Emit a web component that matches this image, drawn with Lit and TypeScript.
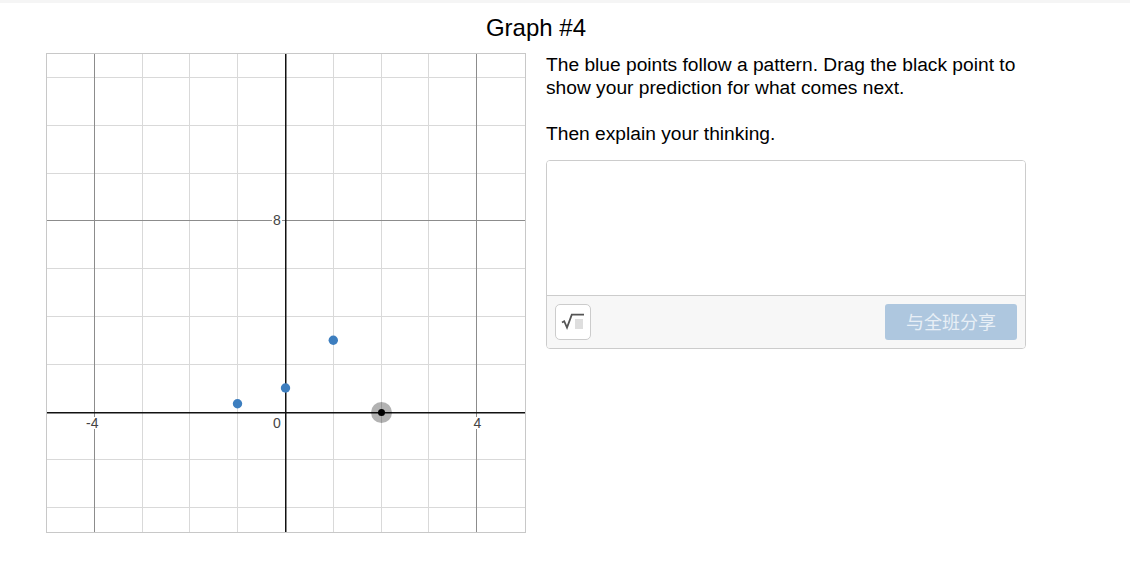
import { LitElement, html, css, svg } from "lit";
import { customElement } from "lit/decorators.js";

@customElement("app-root")
export class AppRoot extends LitElement {
  static styles = css`
    :host { display: block; font-family: "Liberation Sans", Arial, sans-serif; color: #000; background: #fff; min-height: 586px; }
    .topbar { height: 3px; background: #f5f5f5; }
    .wrap { width: 980px; margin-left: 46px; }
    h1 { margin: 0; font-size: 24px; font-weight: 400; line-height: 26px; text-align: center; padding-top: 12px; height: 38px; box-sizing: border-box; }
    .cols { display: grid; grid-template-columns: 480px 480px; column-gap: 20px; margin-top: 12px; }
    .graph { display: block; width: 480px; height: 480px; }
    .prompt { font-size: 19.2px; line-height: 23px; margin: 0; padding-top: 0; }
    .editor { margin-top: 15px; height: 189px; box-sizing: border-box; border: 1px solid #ccc; border-radius: 4px; display: flex; flex-direction: column; overflow: hidden; }
    .input { height: 134px; border-bottom: 1px solid #ccc; flex: none; background: #fff; }
    .bar { flex: 1; background: #f7f7f7; display: flex; align-items: center; justify-content: space-between; padding: 0 8px; }
    .math { width: 36px; height: 36px; box-sizing: border-box; background: #fff; border: 1px solid #ccc; border-radius: 5px; display: flex; align-items: center; justify-content: center; }
    .math svg { display: block; }
    .share { width: 132px; height: 36px; box-sizing: border-box; padding-bottom: 3px; border-radius: 3px; background: #aec7df; color: #e8eff6; font-size: 18px; display: flex; align-items: center; justify-content: center; font-family: "Liberation Sans", "Noto Sans CJK SC", sans-serif; }
  `;

  render() {
    return html`
      <div class="topbar"></div>
      <div class="wrap">
        <h1>Graph #4</h1>
        <div class="cols">
          <svg class="graph" viewBox="46 53 480 480" xmlns="http://www.w3.org/2000/svg">
            <rect x="46.5" y="53.5" width="479" height="479" fill="#fff" stroke="#c8c8c8"/>
            ${[142.5, 189.5, 237.5, 333.5, 381.5, 428.5].map(x => svg`<line x1=${x} x2=${x} y1="54" y2="532" stroke="#d9d9d9"/>`)}
            ${[77.5, 125.5, 173.5, 268.5, 316.5, 364.5, 459.5, 507.5].map(y => svg`<line x1="47" x2="525" y1=${y} y2=${y} stroke="#d9d9d9"/>`)}
            <line x1="94.5" x2="94.5" y1="54" y2="532" stroke="#8c8c8c"/>
            <line x1="476.5" x2="476.5" y1="54" y2="532" stroke="#8c8c8c"/>
            <line x1="47" x2="525" y1="220.5" y2="220.5" stroke="#8c8c8c"/>
            <line x1="285.75" x2="285.75" y1="54" y2="532" stroke="#111" stroke-width="1.5"/>
            <line x1="47" x2="525" y1="412.75" y2="412.75" stroke="#111" stroke-width="1.5"/>
            <g font-family="Liberation Sans, Arial, sans-serif" font-size="14" fill="#444">
              <rect x="272" y="213" width="10" height="14" fill="#fff"/>
              <text x="273" y="225">8</text>
              <rect x="85" y="417" width="16" height="12" fill="#fff"/>
              <text x="86" y="428">-4</text>
              <rect x="272" y="417" width="10" height="12" fill="#fff"/>
              <text x="273" y="428">0</text>
              <rect x="472" y="417" width="10" height="12" fill="#fff"/>
              <text x="473.5" y="428">4</text>
            </g>
            <circle cx="237.5" cy="403.7" r="4.7" fill="#3d7ebf"/>
            <circle cx="285.5" cy="388" r="4.7" fill="#3d7ebf"/>
            <circle cx="333.3" cy="340.3" r="4.7" fill="#3d7ebf"/>
            <circle cx="381.5" cy="412.5" r="10.5" fill="#000" fill-opacity=".3"/>
            <circle cx="381.5" cy="412.5" r="3.5" fill="#000"/>
          </svg>
          <div>
            <p class="prompt">The blue points follow a pattern. Drag the black point to<br>show your prediction for what comes next.<br><br>Then explain your thinking.</p>
            <div class="editor">
              <div class="input"></div>
              <div class="bar">
                <div class="math" aria-label="math">
                  <svg width="24" height="20" viewBox="0 0 24 20">
                    <rect x="14" y="7" width="8" height="10" fill="#dedede"/>
                    <path d="M1 10.5 L3.2 9.2 L6 15.5 L10.8 2.6 H23" fill="none" stroke="#555" stroke-width="1.8"/>
                  </svg>
                </div>
                <div class="share">与全班分享</div>
              </div>
            </div>
          </div>
        </div>
      </div>
    `;
  }
}
